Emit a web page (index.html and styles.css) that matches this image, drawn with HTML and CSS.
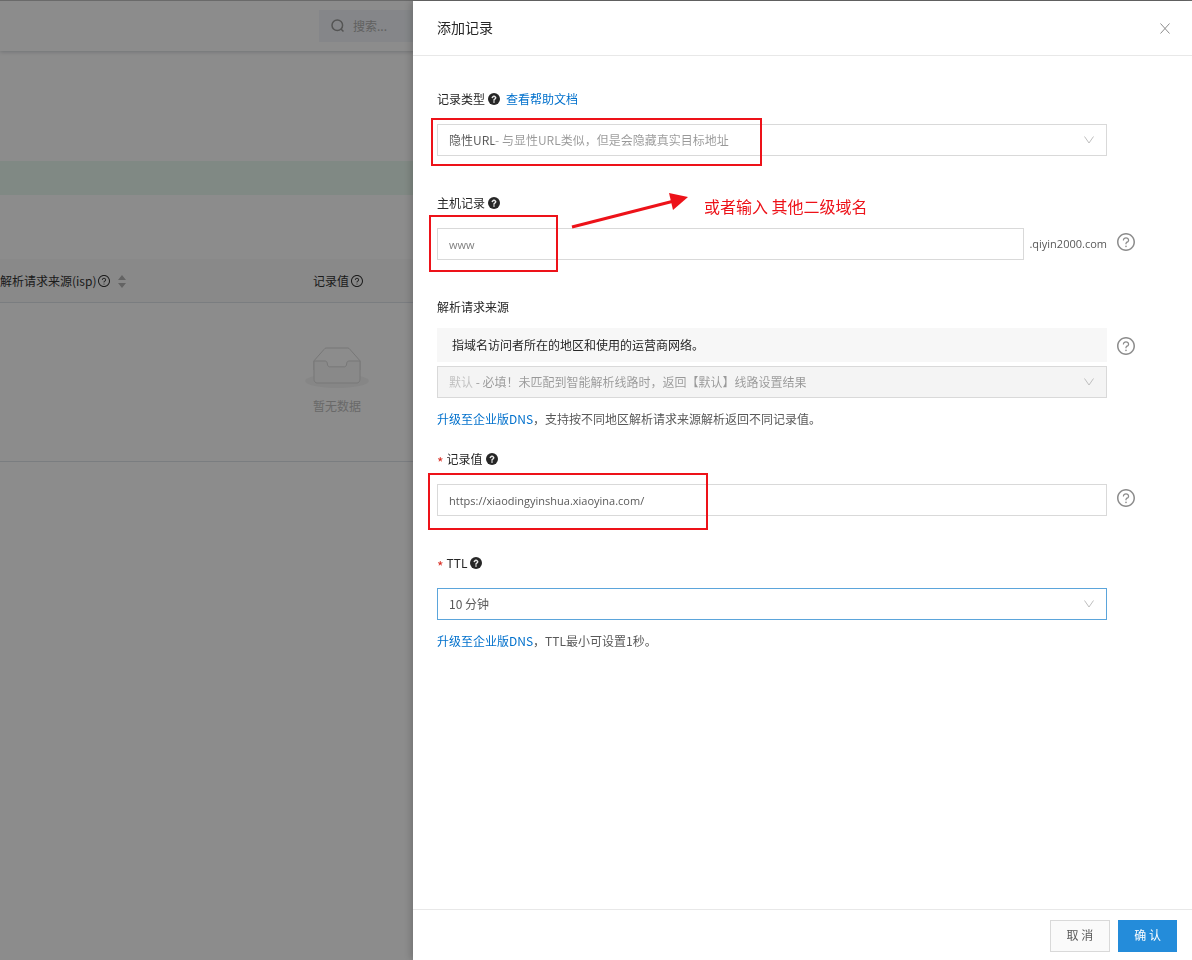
FILE: index.html
```html
<!DOCTYPE html>
<html lang="zh-CN">
<head>
<meta charset="utf-8">
<title>添加记录</title>
<link rel="stylesheet" href="styles.css">
</head>
<body>
<svg class="sprite" aria-hidden="true">
  <symbol id="mark" viewBox="0 0 1024 1024">
    <path d="M623.6 316.7C593.6 290.4 554 276 512 276s-81.6 14.5-111.6 40.7C369.2 344 352 380.7 352 420v7.6c0 4.4 3.6 8 8 8h48c4.4 0 8-3.6 8-8V420c0-44.1 43.1-80 96-80s96 35.9 96 80c0 31.1-22 59.6-56.1 72.7-21.2 8.1-39.2 22.3-52.1 40.9-13.1 19-19.9 41.8-19.9 64.9V620c0 4.4 3.6 8 8 8h48c4.4 0 8-3.6 8-8v-22.7a48.3 48.3 0 0 1 30.9-44.8c59-22.7 97.1-74.7 97.1-132.5.1-39.3-17.1-76-48.3-103.3zM472 732a40 40 0 1 0 80 0 40 40 0 1 0-80 0z"/>
  </symbol>
  <symbol id="help" viewBox="64 64 896 896">
    <path d="M512 64C264.6 64 64 264.6 64 512s200.6 448 448 448 448-200.6 448-448S759.4 64 512 64zm0 820c-205.4 0-372-166.6-372-372s166.6-372 372-372 372 166.6 372 372-166.6 372-372 372z"/>
    <use href="#mark" width="1024" height="1024"/>
  </symbol>
  <symbol id="help-solid" viewBox="64 64 896 896">
    <circle cx="512" cy="512" r="448"/>
    <use href="#mark" width="1024" height="1024" fill="#fff" stroke="#fff" stroke-width="36"/>
  </symbol>
  <symbol id="chevron" viewBox="0 0 10 8">
    <path d="M.5.5 5 7 9.500.5" fill="none" stroke="currentColor"/>
  </symbol>
</svg>

<div class="page">
  <header class="topbar">
    <label class="search">
      <svg viewBox="0 0 14 14" width="14" height="14"><circle cx="6.300" cy="6.300" r="5.300"/><path d="m10 10 2.500 2.500"/></svg>
      <input type="search" placeholder="搜索..." aria-label="搜索">
    </label>
  </header>
  <main class="content">
    <div class="notice"></div>
    <table class="records">
      <thead>
        <tr>
          <th class="col-isp"><span class="head">解析请求来源(isp)<svg class="ico-s"><use href="#help"/></svg><svg class="sorter" viewBox="0 0 8 13"><path d="M4 0 8 5H0zM4 13 0 8h8z"/></svg></span></th>
          <th><span class="head">记录值<svg class="ico-s"><use href="#help"/></svg></span></th>
        </tr>
      </thead>
      <tbody>
        <tr>
          <td colspan="2">
            <svg class="empty" width="64" height="41" viewBox="0 0 64 41"><g transform="translate(0 1)" fill="none"><ellipse cx="32" cy="33" rx="32" ry="7" fill="#f5f5f5"/><g stroke="#d9d9d9"><path d="M55 12.760L44.854 1.258C44.367.474 43.656 0 42.907 0H21.093c-.749 0-1.460.474-1.947 1.257L9 12.761V22h46v-9.240z"/><path d="M41.613 15.931c0-1.605.994-2.930 2.227-2.931H55v18.137C55 33.260 53.680 35 52.050 35h-40.100C10.320 35 9 33.259 9 31.137V13h11.160c1.233 0 2.227 1.323 2.227 2.928v.022c0 1.605 1.005 2.901 2.237 2.901h14.752c1.232 0 2.237-1.308 2.237-2.913v-.007z" fill="#fafafa"/></g></g></svg>
            <p class="empty-text">暂无数据</p>
          </td>
        </tr>
      </tbody>
    </table>
  </main>
</div>
<div class="mask"></div>

<section class="drawer" role="dialog" aria-labelledby="title">
  <header class="drawer-head">
    <h1 id="title">添加记录</h1>
    <button class="close" type="button" aria-label="关闭"><svg viewBox="0 0 10 11" width="10" height="11"><path d="M.5.5 9.500 10.500M9.500.5.5 10.500"/></svg></button>
  </header>

  <form class="form" id="record">
    <div class="group">
      <div class="label-row"><label for="type">记录类型</label><svg class="ico-s"><use href="#help-solid"/></svg><a class="doc" href="#">查看帮助文档</a></div>
      <div class="row">
        <div class="control">
          <div class="picker">
            <select id="type" class="box two-tone"><option>隐性URL- 与显性URL类似，但是会隐藏真实目标地址</option></select>
            <svg class="arrow"><use href="#chevron"/></svg>
          </div>
          <span class="frame frame-type"></span>
        </div>
      </div>
    </div>

    <div class="group">
      <div class="label-row"><label for="host">主机记录</label><svg class="ico-s"><use href="#help-solid"/></svg></div>
      <div class="row">
        <div class="control host">
          <input id="host" class="box latin muted" type="text" value="www">
          <span class="suffix latin">.qiyin2000.com</span>
          <span class="frame frame-host"></span>
          <svg class="pointer" width="118" height="38" viewBox="0 0 118 38"><path d="M1 34 103 8" stroke="#ed1219" stroke-width="3"/><path d="M98 0 117 4 102 17z" fill="#ed1219"/></svg>
          <span class="remark">或者输入 其他二级域名</span>
        </div>
        <svg class="ico-l"><use href="#help"/></svg>
      </div>
    </div>

    <div class="group noted">
      <div class="label-row tight"><label for="isp">解析请求来源</label></div>
      <div class="row">
        <p class="info">指域名访问者所在的地区和使用的运营商网络。</p>
        <svg class="ico-l middle"><use href="#help"/></svg>
      </div>
      <div class="row">
        <div class="picker off">
          <select id="isp" class="box two-tone faint" disabled><option>默认 - 必填！未匹配到智能解析线路时，返回【默认】线路设置结果</option></select>
          <svg class="arrow"><use href="#chevron"/></svg>
        </div>
      </div>
      <p class="note"><a href="#">升级至企业版DNS</a>，支持按不同地区解析请求来源解析返回不同记录值。</p>
    </div>

    <div class="group">
      <div class="label-row"><span class="star">*</span><label for="value">记录值</label><svg class="ico-s"><use href="#help-solid"/></svg></div>
      <div class="row">
        <div class="control">
          <input id="value" class="box latin" type="text" value="https://xiaodingyinshua.xiaoyina.com/">
          <span class="frame frame-value"></span>
        </div>
        <svg class="ico-l"><use href="#help"/></svg>
      </div>
    </div>

    <div class="group noted">
      <div class="label-row"><span class="star">*</span><label for="ttl">TTL</label><svg class="ico-s"><use href="#help-solid"/></svg></div>
      <div class="row">
        <div class="picker">
          <select id="ttl" class="box active"><option>10 分钟</option></select>
          <svg class="arrow"><use href="#chevron"/></svg>
        </div>
      </div>
      <p class="note"><a href="#">升级至企业版DNS</a>，TTL最小可设置1秒。</p>
    </div>
  </form>

  <footer class="drawer-foot">
    <button class="btn" type="button">取 消</button>
    <button class="btn primary" type="submit" form="record">确 认</button>
  </footer>
</section>
</body>
</html>
```
FILE: styles.css
```css
* { box-sizing: border-box; }
body, h1, p { margin: 0; }
body {
  min-height: 100vh;
  border-top: 1px solid #6a6a6a;
  background: #fff;
  color: #595959;
  font: 12px/20px "Noto Sans CJK SC", sans-serif;
  overflow: hidden;
}
input, select, button { font: inherit; color: inherit; }
a { color: #0070cc; text-decoration: none; }
.latin { font-family: "Open Sans", "Noto Sans CJK SC", sans-serif; font-size: 11px; }
.sprite { position: absolute; width: 0; height: 0; }
svg { flex: none; fill: currentColor; }

/* Page behind the drawer */
.topbar {
  display: flex;
  height: 50px;
  padding: 9px 0 9px 319px;
  box-shadow: 0 1px 4px rgba(0, 21, 41, .2);
}
.search {
  display: flex;
  align-items: center;
  gap: 6px;
  flex: 1;
  padding-left: 12px;
  background: #f2f5f9;
  color: #999;
}
.search svg { fill: none; stroke: currentColor; stroke-width: 1.500; }
.search input {
  flex: 1;
  border: 0;
  outline: 0;
  background: none;
}
.search input::placeholder { color: #b0b0b0; }
.content { padding-top: 110px; }
.notice { height: 34px; background: #eafaf0; }
.records {
  width: 674px;
  margin-top: 64px;
  border-collapse: collapse;
  table-layout: fixed;
}
.records th {
  height: 43px;
  padding: 2px 0 0;
  border-bottom: 1px solid #dfe3ea;
  background: #fafafa;
  color: #333;
  font-weight: 400;
  text-align: left;
}
.records .col-isp { width: 313px; }
.records td {
  padding: 44px 0 45px;
  border-bottom: 1px solid #dfe3ea;
}
.head { display: flex; align-items: center; gap: 2px; }
.sorter { width: 8px; height: 13px; margin-left: 6px; color: #b5b5b5; }
.empty { display: block; margin: 0 auto; }
.empty-text { width: fit-content; margin: 8px auto 0; color: #bfbfbf; }
.mask { position: fixed; inset: 1px 0 0; background: rgba(0, 0, 0, .45); }

/* Drawer */
.drawer {
  position: fixed;
  inset: 1px 0 0 413px;
  display: flex;
  flex-direction: column;
  background: #fff;
  box-shadow: -2px 0 8px rgba(0, 0, 0, .2);
}
.drawer-head {
  display: flex;
  align-items: center;
  justify-content: space-between;
  padding: 16px 22px 16px 24px;
  border-bottom: 1px solid #e8e8e8;
}
.drawer-head h1 {
  padding-bottom: 2px;
  color: #262626;
  font-size: 14px;
  font-weight: 400;
  line-height: 20px;
}
.close {
  display: flex;
  padding: 1px 0 0;
  border: 0;
  background: none;
}
.close svg { stroke: #8c8c8c; stroke-width: 1; }
.form { flex: 1; padding: 32px 57px 0 24px; }
.group { margin-bottom: 36px; }
.group.noted { margin-bottom: 16px; }
.label-row {
  display: flex;
  align-items: center;
  gap: 3px;
  height: 22px;
  margin-bottom: 14px;
  color: #262626;
}
.label-row.tight { margin-bottom: 10px; }
.doc { margin-left: 3px; }
.star { padding-top: 6px; color: #d93026; font-size: 14px; }
.ico-s { width: 12px; height: 12px; }
.ico-l { width: 18px; height: 18px; margin-top: 5px; color: #8c8c8c; }
.ico-l.middle { margin-top: 9px; }
.row {
  display: grid;
  grid-template-columns: 1fr 18px;
  column-gap: 10px;
}
.control, .picker { position: relative; display: flex; }
.control > .picker { flex: 1; }
.box {
  flex: 1;
  min-width: 0;
  height: 32px;
  padding: 0 11px;
  border: 1px solid #d9d9d9;
  border-radius: 0;
  outline: 0;
  background: #fff;
  appearance: none;
}
.box.active { border-color: #5ba5db; }
.box.muted { color: #808080; }
.two-tone {
  background: linear-gradient(90deg, #595959 56px, #999 56px);
  background-clip: text;
  -webkit-text-fill-color: transparent;
  opacity: 1;
}
.two-tone.faint { background-image: linear-gradient(90deg, #bfbfbf 36px, #999 36px); }
.off { background: #f4f4f4; }
.arrow {
  position: absolute;
  top: 12px;
  right: 13px;
  width: 10px;
  height: 8px;
  color: #bfbfbf;
  pointer-events: none;
}
.host { gap: 5px; }
.suffix { line-height: 32px; }
.info {
  margin-bottom: 4px;
  padding: 7px 15px;
  background: #f7f7f7;
  color: #262626;
}
.note { margin-top: 10px; padding-bottom: 2px; line-height: 22px; }

/* Annotations drawn over the form */
.frame {
  position: absolute;
  border: 2px solid #ed1219;
  pointer-events: none;
}
.frame-type { inset: -6px auto auto -6px; width: 331px; height: 48px; }
.frame-host { inset: -13px auto auto -8px; width: 129px; height: 57px; }
.frame-value { inset: -11px auto auto -9px; width: 280px; height: 57px; }
.pointer { position: absolute; top: -35px; left: 134px; }
.remark {
  position: absolute;
  top: -34px;
  left: 267px;
  color: #ed1219;
  font-size: 16px;
  line-height: 24px;
}

.drawer-foot {
  display: flex;
  justify-content: flex-end;
  gap: 8px;
  padding: 10px 15px 8px;
  border-top: 1px solid #e8e8e8;
}
.btn {
  height: 32px;
  padding: 0 16px 2px;
  border: 1px solid #d9d9d9;
  background: #fafafa;
}
.btn.primary { padding: 0 15px 2px; border-color: #248cda; background: #248cda; color: #fff; }
```
